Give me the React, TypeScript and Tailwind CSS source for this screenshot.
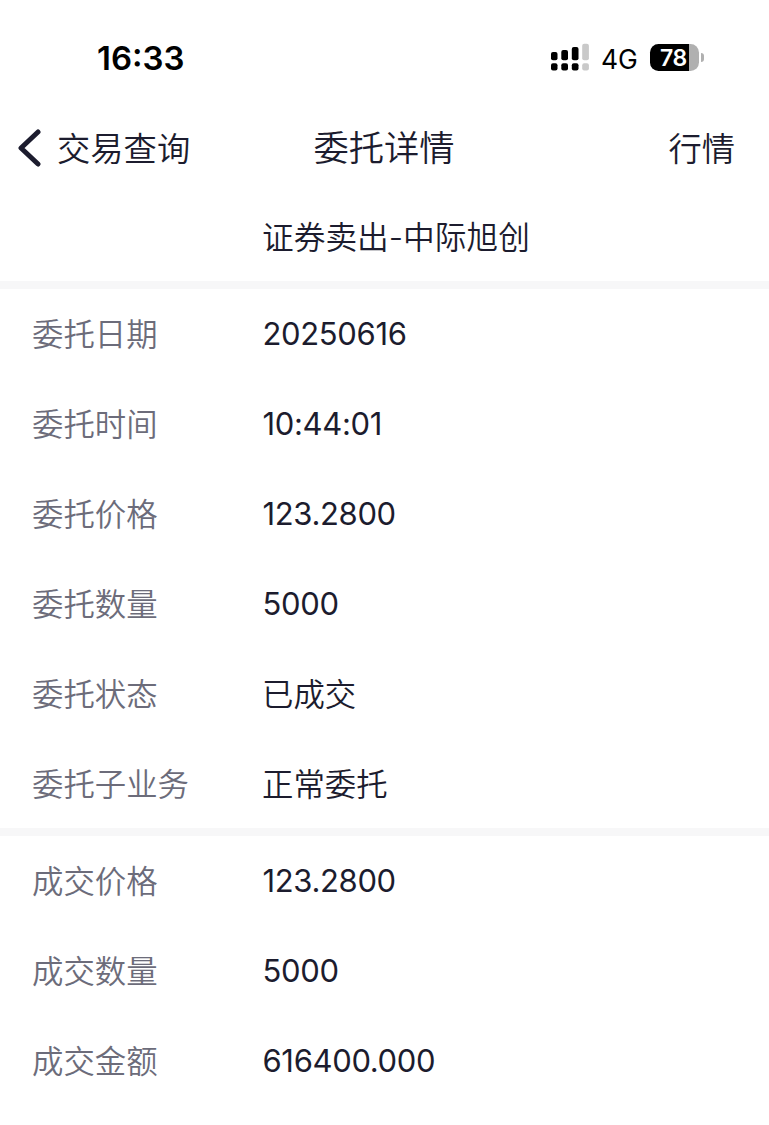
import clsx from 'clsx';

const orderRows = [
  { label: '委托日期', value: '20250616' },
  { label: '委托时间', value: '10:44:01' },
  { label: '委托价格', value: '123.2800' },
  { label: '委托数量', value: '5000' },
  { label: '委托状态', value: '已成交' },
  { label: '委托子业务', value: '正常委托' },
];

const dealRows = [
  { label: '成交价格', value: '123.2800' },
  { label: '成交数量', value: '5000' },
  { label: '成交金额', value: '616400.000' },
];

function StatusBar() {
  return (
    <div className="flex h-[104px] items-start pt-[37px] text-black">
      <span className="ml-[97px] w-[90px] text-[33px] leading-[42px] font-semibold">16:33</span>
      <svg className="mt-[6px] ml-[364px] h-[28px] w-[38px]" viewBox="0 0 38 28">
        <g fill="#000">
          <rect x="0" y="20.3" width="6.5" height="7.2" rx="2" />
          <rect x="10.3" y="20.3" width="6.7" height="7.2" rx="2" />
          <rect x="20.8" y="20.3" width="6.7" height="7.2" rx="2" />
          <rect x="0" y="9" width="6.5" height="8.3" rx="2" />
          <rect x="10.3" y="7" width="6.7" height="10.3" rx="2" />
          <rect x="20.8" y="4" width="6.7" height="13.3" rx="2" />
        </g>
        <g fill="#c9c9c9">
          <rect x="31.2" y="20.3" width="6.7" height="7.2" rx="2" />
          <rect x="31.2" y="0.8" width="6.7" height="16.5" rx="2" />
        </g>
      </svg>
      <span className="mt-px ml-[12px] w-[38px] text-[26.5px] leading-[42px]">4G</span>
      <div className="mt-[7px] ml-[11px] flex items-center">
        <div className="flex h-[27px] w-[49px] items-center justify-center rounded-[8.5px] bg-[linear-gradient(90deg,#000_79%,#b0b0b0_79%)] pt-px pr-[2px] text-[23px] font-semibold tracking-[-0.3px] text-white">
          78
        </div>
        <div className="ml-[2px] h-[9px] w-[3px] rounded-r-full bg-[#b0b0b0]" />
      </div>
    </div>
  );
}

function DetailRow({ label, value }: { label: string; value: string }) {
  const isNumber = /^[\d.:]+$/.test(value);
  return (
    <div className="flex h-[90px] items-center pl-8">
      <span className="w-[230px] pt-[3px] text-[31.4px] font-[350] text-[#6c6c7a]">{label}</span>
      <span
        className={clsx(
          'text-[#1c1c2e]',
          isNumber ? 'pl-[0.5px] text-[31px] tracking-[-0.35px]' : 'pt-[3px] text-[31.4px] font-[350]',
        )}
      >
        {value}
      </span>
    </div>
  );
}

export default function App() {
  return (
    <div className="h-[1125px] w-[769px] overflow-hidden bg-white font-['Inter','Noto_Sans_CJK_SC',sans-serif] whitespace-nowrap text-[#1c1c2e]">
      <StatusBar />
      <header className="grid h-[88px] grid-cols-[1fr_auto_1fr] items-center pr-[34px] pl-[17px] text-[33.3px] font-[350]">
        <div className="flex items-center">
          <svg className="h-[40px] w-[24px]" viewBox="0 0 24 40" fill="none" stroke="currentColor" strokeWidth="5">
            <path d="M21 4 4 20l17 16" strokeLinecap="round" strokeLinejoin="round" />
          </svg>
          <span className="ml-[16px] pt-[3px]">交易查询</span>
        </div>
        <h1 className="pt-[2px] pl-[16px] text-center text-[35.3px] font-[350]">委托详情</h1>
        <span className="pt-[3px] text-right">行情</span>
      </header>
      <div className="flex h-[89px] items-center pt-[2px] pl-[262px] text-[31.7px] font-[350]">证券卖出-中际旭创</div>
      <div className="h-[8px] bg-[#f7f7f8]" />
      <section className="h-[539px]">
        {orderRows.map((row) => (
          <DetailRow key={row.label} {...row} />
        ))}
      </section>
      <div className="h-[8px] bg-[#f7f7f8]" />
      <section>
        {dealRows.map((row) => (
          <DetailRow key={row.label} {...row} />
        ))}
      </section>
    </div>
  );
}
